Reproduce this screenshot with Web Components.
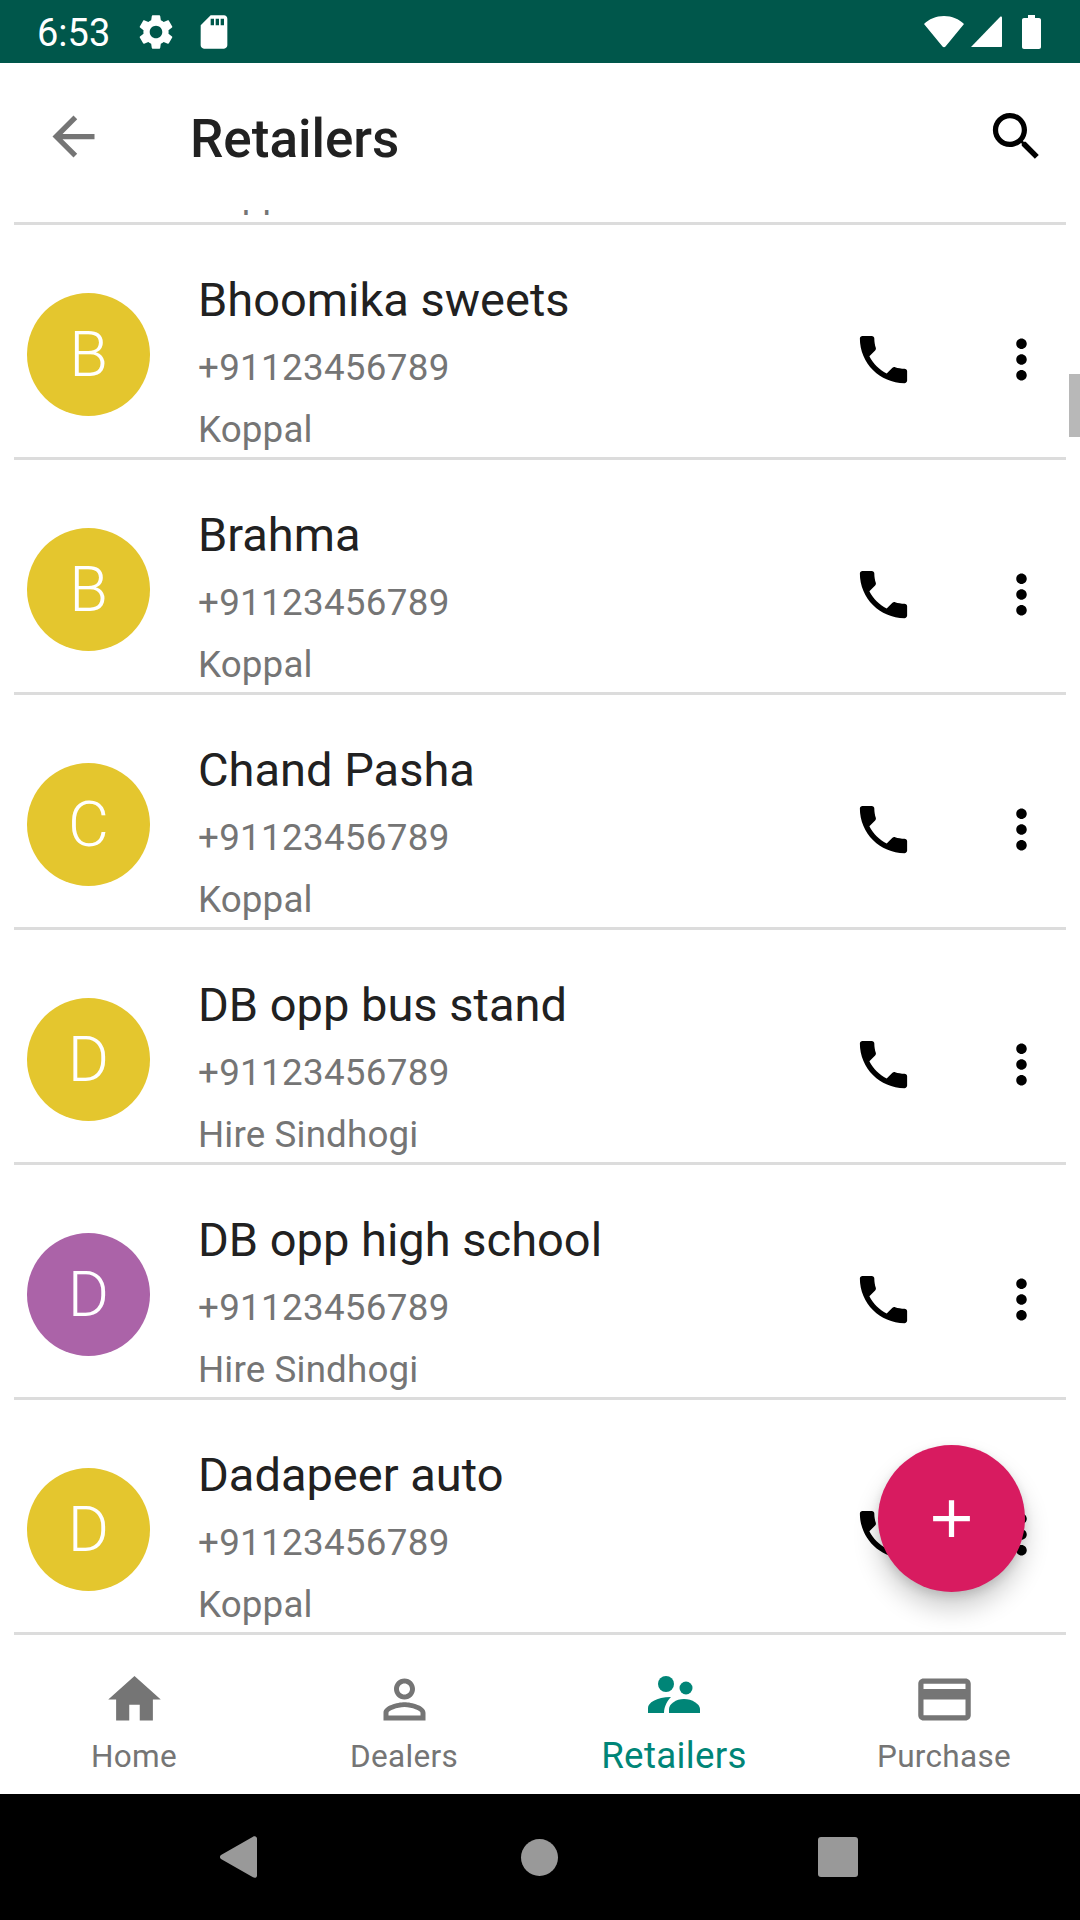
<!DOCTYPE html>
<html>
<head>
<meta charset="utf-8">
<title>Retailers</title>
<style>
  html, body { margin: 0; padding: 0; background: #fff; }
  body { font-family: Roboto, "Liberation Sans", sans-serif; width: 1080px; height: 1920px; overflow: hidden; }
</style>
</head>
<body>
<retailers-screen>
  <status-bar slot="top" time="6:53"></status-bar>
  <app-bar slot="top">Retailers</app-bar>

  <retailer-list slot="list">
    <retailer-row city="Koppal" scrolled></retailer-row>
    <retailer-row letter="B" name="Bhoomika sweets" phone="+91123456789" city="Koppal"></retailer-row>
    <retailer-row letter="B" name="Brahma" phone="+91123456789" city="Koppal"></retailer-row>
    <retailer-row letter="C" name="Chand Pasha" phone="+91123456789" city="Koppal"></retailer-row>
    <retailer-row letter="D" name="DB opp bus stand" phone="+91123456789" city="Hire Sindhogi"></retailer-row>
    <retailer-row letter="D" name="DB opp high school" phone="+91123456789" city="Hire Sindhogi" color="#ab63a8"></retailer-row>
    <retailer-row letter="D" name="Dadapeer auto" phone="+91123456789" city="Koppal"></retailer-row>
  </retailer-list>

  <fab-button slot="list"></fab-button>

  <bottom-tabs slot="bottom">
    <tab-item icon="home">Home</tab-item>
    <tab-item icon="person">Dealers</tab-item>
    <tab-item icon="people" active>Retailers</tab-item>
    <tab-item icon="card">Purchase</tab-item>
  </bottom-tabs>
  <system-nav slot="bottom"></system-nav>
</retailers-screen>

<script>
const ICONS = {
  back: 'M20 11H7.83l5.59-5.59L12 4l-8 8 8 8 1.41-1.41L7.83 13H20v-2z',
  search: 'M15.5 14h-.79l-.28-.27C15.41 12.59 16 11.11 16 9.5 16 5.91 13.09 3 9.5 3S3 5.91 3 9.5 5.91 16 9.5 16c1.61 0 3.09-.59 4.23-1.57l.27.28v.79l5 4.99L20.49 19l-4.99-5zm-6 0C7.01 14 5 11.99 5 9.5S7.01 5 9.5 5 14 7.01 14 9.5 11.99 14 9.5 14z',
  phone: 'M6.62 10.79c1.44 2.83 3.76 5.14 6.59 6.59l2.2-2.2c.27-.27.67-.36 1.02-.24 1.12.37 2.33.57 3.57.57.55 0 1 .45 1 1V20c0 .55-.45 1-1 1-9.39 0-17-7.61-17-17 0-.55.45-1 1-1h3.5c.55 0 1 .45 1 1 0 1.25.2 2.45.57 3.57.11.35.03.74-.25 1.02l-2.2 2.2z',
  more: 'M12 8c1.1 0 2-.9 2-2s-.9-2-2-2-2 .9-2 2 .9 2 2 2zm0 2c-1.1 0-2 .9-2 2s.9 2 2 2 2-.9 2-2-.9-2-2-2zm0 6c-1.1 0-2 .9-2 2s.9 2 2 2 2-.9 2-2-.9-2-2-2z',
  home: 'M10 20v-6h4v6h5v-8h3L12 3 2 12h3v8z',
  person: 'M12 5.9c1.16 0 2.1.94 2.1 2.1s-.94 2.1-2.1 2.1S9.9 9.16 9.9 8s.94-2.1 2.1-2.1m0 9c2.97 0 6.1 1.46 6.1 2.1v1.1H5.9V17c0-.64 3.13-2.1 6.1-2.1M12 4C9.79 4 8 5.79 8 8s1.79 4 4 4 4-1.79 4-4-1.79-4-4-4zm0 9c-2.67 0-8 1.34-8 4v3h16v-3c0-2.66-5.33-4-8-4z',
  card: 'M20 4H4c-1.11 0-1.99.89-1.99 2L2 18c0 1.11.89 2 2 2h16c1.11 0 2-.89 2-2V6c0-1.11-.89-2-2-2zm0 14H4v-6h16v6zm0-10H4V6h16v2z',
  gear: 'M19.14 12.94c.04-.3.06-.61.06-.94 0-.32-.02-.64-.07-.94l2.03-1.58c.18-.14.23-.41.12-.61l-1.92-3.32c-.12-.22-.37-.29-.59-.22l-2.39.96c-.5-.38-1.03-.7-1.62-.94l-.36-2.54c-.04-.24-.24-.41-.48-.41h-3.84c-.24 0-.43.17-.47.41l-.36 2.54c-.59.24-1.13.57-1.62.94l-2.39-.96c-.22-.08-.47 0-.59.22L2.74 8.87c-.12.21-.08.47.12.61l2.03 1.58c-.05.3-.09.63-.09.94s.02.64.07.94l-2.03 1.58c-.18.14-.23.41-.12.61l1.92 3.32c.12.22.37.29.59.22l2.39-.96c.5.38 1.03.7 1.62.94l.36 2.54c.05.24.24.41.48.41h3.84c.24 0 .44-.17.47-.41l.36-2.54c.59-.24 1.13-.56 1.62-.94l2.39.96c.22.08.47 0 .59-.22l1.92-3.32c.12-.22.07-.47-.12-.61l-2.01-1.58zM12 15.6c-1.98 0-3.6-1.62-3.6-3.6s1.62-3.6 3.6-3.6 3.6 1.62 3.6 3.6-1.62 3.6-3.6 3.6z',
  sd: 'M18 2h-8L4.02 8 4 20c0 1.1.9 2 2 2h12c1.1 0 2-.9 2-2V4c0-1.1-.9-2-2-2zm-6 6h-2V4h2v4zm3 0h-2V4h2v4zm3 0h-2V4h2v4z'
};

function svgIcon(name, size, color) {
  return `<svg width="${size}" height="${size}" viewBox="0 0 24 24" fill="${color}"><path d="${ICONS[name]}"/></svg>`;
}

class RetailersScreen extends HTMLElement {
  constructor() {
    super();
    this.attachShadow({ mode: 'open' }).innerHTML = `
      <style>
        :host { display: flex; flex-direction: column; width: 1080px; height: 1920px; }
        .middle { position: relative; flex: 1; min-height: 0; display: flex; flex-direction: column; }
      </style>
      <slot name="top"></slot>
      <div class="middle"><slot name="list"></slot></div>
      <slot name="bottom"></slot>`;
  }
}

class StatusBar extends HTMLElement {
  constructor() {
    super();
    this.attachShadow({ mode: 'open' });
  }

  connectedCallback() {
    this.shadowRoot.innerHTML = `
      <style>
        :host { display: flex; align-items: center; height: 63px; background: #00574b; color: #fff; flex: none; }
        .time { font-size: 38px; line-height: 63px; margin-left: 37px; padding-top: 2px; height: 61px; }
        svg { display: block; }
        .gear { margin-left: 25px; }
        .sd { margin-left: 17px; }
        .right { margin-left: auto; margin-right: 39px; display: flex; align-items: center; }
        .signal { margin-left: 7px; }
        .battery { margin-left: 20px; }
      </style>
      <span class="time">${this.getAttribute('time')}</span>
      <span class="gear">${svgIcon('gear', 42, '#fff')}</span>
      <span class="sd">${svgIcon('sd', 40, '#fff')}</span>
      <div class="right">
        <svg width="40" height="32" viewBox="0 0 40 32"><path d="M0 8C5 3 12 0 20 0s15 3 20 8L21.5 30.6c-.8 1-2.2 1-3 0z" fill="#fff"/></svg>
        <svg class="signal" width="31" height="32" viewBox="0 0 31 32"><path d="M0 31 29 1c.8-.8 2-.4 2 .8V30c0 .6-.4 1-1 1z" fill="#fff"/></svg>
        <svg class="battery" width="19" height="34" viewBox="0 0 19 34"><path d="M6 0h7v3h4c1.1 0 2 .9 2 2v27c0 1.1-.9 2-2 2H2c-1.1 0-2-.9-2-2V5c0-1.1.9-2 2-2h4z" fill="#fff"/></svg>
      </div>`;
  }
}

class AppBar extends HTMLElement {
  constructor() {
    super();
    this.attachShadow({ mode: 'open' }).innerHTML = `
      <style>
        :host { display: flex; align-items: center; height: 147px; background: #fff; flex: none; }
        svg { display: block; }
        .back { margin-left: 42px; display: block; }
        .title { margin-left: 85px; font-size: 53px; font-weight: 500; line-height: 62px; padding-top: 4px; color: #212121; flex: 1; }
        .search { margin-right: 32px; display: block; }
      </style>
      <span class="back">${svgIcon('back', 63, '#757575')}</span>
      <div class="title"><slot></slot></div>
      <span class="search">${svgIcon('search', 63, '#000')}</span>`;
  }
}

class RetailerList extends HTMLElement {
  constructor() {
    super();
    this.attachShadow({ mode: 'open' }).innerHTML = `
      <style>
        :host { display: block; flex: 1; min-height: 0; overflow: hidden; position: relative; background: #fff; }
        .thumb { position: absolute; right: 0; top: 164px; width: 11px; height: 63px; background: #b8b8b8; }
      </style>
      <slot></slot>
      <div class="thumb"></div>`;
  }
}

class RetailerRow extends HTMLElement {
  constructor() {
    super();
    this.attachShadow({ mode: 'open' });
  }

  connectedCallback() {
    const letter = this.getAttribute('letter') || '';
    const name = this.getAttribute('name') || '';
    const phone = this.getAttribute('phone') || '';
    const city = this.getAttribute('city') || '';
    const color = this.getAttribute('color') || '#e4c62e';
    this.shadowRoot.innerHTML = `
      <style>
        :host { display: flex; align-items: flex-start; height: 232px; margin: 0 14px; border-bottom: 3px solid #dcdcdc; }
        :host([scrolled]) { margin-top: -220px; }
        svg { display: block; }
        .avatar {
          width: 123px; height: 123px; margin: 68px 0 0 13px; border-radius: 50%;
          background: ${color}; color: #fff; flex: none;
          display: flex; align-items: center; justify-content: center;
          font-size: 63px; font-weight: 300;
        }
        .text { flex: 1; min-width: 0; margin-left: 48px; padding-top: 50px; }
        .text div { white-space: nowrap; }
        .name { font-size: 47px; line-height: 50px; height: 50px; color: #212121; }
        .phone { font-size: 36.75px; line-height: 50px; height: 50px; color: #757575; margin-top: 18px; letter-spacing: .3px; }
        .city { font-size: 36.75px; line-height: 50px; height: 50px; color: #757575; margin-top: 12px; letter-spacing: .15px; }
        .action { flex: none; display: block; margin-top: 103px; height: 63px; }
        .call { margin-right: 75px; }
        .more { margin-right: 13px; }
      </style>
      <div class="avatar">${letter}</div>
      <div class="text">
        <div class="name">${name}</div>
        <div class="phone">${phone}</div>
        <div class="city">${city}</div>
      </div>
      <span class="action call">${svgIcon('phone', 63, '#000')}</span>
      <span class="action more">${svgIcon('more', 63, '#000')}</span>`;
  }
}

class FabButton extends HTMLElement {
  constructor() {
    super();
    this.attachShadow({ mode: 'open' }).innerHTML = `
      <style>
        :host {
          position: absolute; left: 878px; top: 1235px; width: 147px; height: 147px;
          border-radius: 50%; background: #d81b60;
          box-shadow: 0 16px 26px rgba(0,0,0,.2), 0 4px 10px rgba(0,0,0,.12);
          display: flex; align-items: center; justify-content: center;
        }
        svg { display: block; }
      </style>
      <svg width="63" height="63" viewBox="0 0 24 24" fill="#fff"><path d="M19 13h-6v6h-2v-6H5v-2h6V5h2v6h6v2z"/></svg>`;
  }
}

class BottomTabs extends HTMLElement {
  constructor() {
    super();
    this.attachShadow({ mode: 'open' }).innerHTML = `
      <style>
        :host { display: grid; grid-template-columns: repeat(4, 270px); height: 147px; background: #fff; flex: none; }
      </style>
      <slot></slot>`;
  }
}

class TabItem extends HTMLElement {
  constructor() {
    super();
    this.attachShadow({ mode: 'open' });
  }

  connectedCallback() {
    const active = this.hasAttribute('active');
    const color = active ? '#008577' : '#757575';
    const icon = this.getAttribute('icon');
    let glyph = svgIcon(icon, 63, color);
    if (icon === 'people') {
      glyph = `<svg width="63" height="63" viewBox="0 0 63 63" fill="${color}">
        <circle cx="23" cy="16" r="8"/><circle cx="43" cy="20" r="6.5"/>
        <path d="M5 45v-5c0-5 8-11 23-11-3 3-7 9-7 16z"/>
        <path d="M26 45v-4c0-5 7-10 15-10s16 5 16 10v4z"/>
      </svg>`;
    }
    this.shadowRoot.innerHTML = `
      <style>
        :host { display: flex; flex-direction: column; align-items: center; padding: 21px 2px 0 0; color: ${color}; }
        svg { display: block; }
        .label { font-size: ${active ? '36.75px' : '31.5px'}; line-height: 40px; margin-top: ${active ? '5px' : '6px'}; letter-spacing: .3px; }
      </style>
      ${glyph}
      <div class="label"><slot></slot></div>`;
  }
}

class SystemNav extends HTMLElement {
  constructor() {
    super();
    this.attachShadow({ mode: 'open' }).innerHTML = `
      <style>
        :host { display: flex; align-items: center; height: 126px; padding-left: 90px; background: #000; flex: none; box-sizing: border-box; }
        .btn { display: flex; justify-content: center; }
        .back { width: 297px; }
        .home { width: 304px; }
        .recent { width: 294px; }
        svg { display: block; }
        .circle { width: 37px; height: 37px; border-radius: 50%; background: #999; }
        .square { width: 40px; height: 40px; border-radius: 3px; background: #999; }
      </style>
      <div class="btn back"><svg width="37" height="42" viewBox="0 0 37 42"><path d="M1 19 33 .7C35 -.4 37 .6 37 2.6v36.8c0 2-2 3-4 1.900L1 23c-1.400-.8-1.400-3.200 0-4z" fill="#999"/></svg></div>
      <div class="btn home"><div class="circle"></div></div>
      <div class="btn recent"><div class="square"></div></div>`;
  }
}

customElements.define('retailers-screen', RetailersScreen);
customElements.define('status-bar', StatusBar);
customElements.define('app-bar', AppBar);
customElements.define('retailer-list', RetailerList);
customElements.define('retailer-row', RetailerRow);
customElements.define('fab-button', FabButton);
customElements.define('bottom-tabs', BottomTabs);
customElements.define('tab-item', TabItem);
customElements.define('system-nav', SystemNav);
</script>
</body>
</html>
